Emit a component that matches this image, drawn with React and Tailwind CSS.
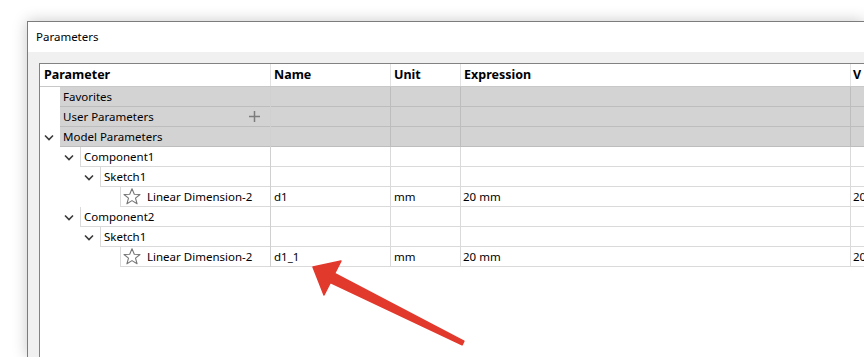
import React from "react";

const rows = [
  { label: "Favorites", indent: 20, gray: true },
  { label: "User Parameters", indent: 20, gray: true, plus: true },
  { label: "Model Parameters", indent: 20, gray: true, chevron: true },
  { label: "Component1", indent: 40, chevron: true },
  { label: "Sketch1", indent: 60, chevron: true },
  { label: "Linear Dimension-2", indent: 80, star: true, name: "d1", unit: "mm", expr: "20 mm", val: "20" },
  { label: "Component2", indent: 40, chevron: true },
  { label: "Sketch1", indent: 60, chevron: true },
  { label: "Linear Dimension-2", indent: 80, star: true, name: "d1_1", unit: "mm", expr: "20 mm", val: "20" },
];

function Chevron() {
  return (
    <svg width="10" height="7" viewBox="0 0 10 7" className="text-[#3a3a3a]">
      <polyline points="1,1.5 5,5.5 9,1.5" fill="none" stroke="currentColor" strokeWidth="1.6" />
    </svg>
  );
}

function Plus() {
  return (
    <svg width="11" height="11" viewBox="0 0 11 11" className="text-[#7c7c7c]">
      <path d="M5.5 0v11M0 5.5h11" stroke="currentColor" strokeWidth="1.5" />
    </svg>
  );
}

function Star() {
  return (
    <svg width="18" height="17" viewBox="0 0 18 17">
      <polygon
        points="9,0.8 11.3,6.2 17,6.5 12.5,10.1 14.1,15.8 9,12.6 3.9,15.8 5.5,10.1 1,6.5 6.7,6.2"
        fill="none"
        stroke="#777"
        strokeWidth="1.1"
        strokeLinejoin="round"
      />
    </svg>
  );
}

function Row({ row }) {
  const line = row.gray ? "border-[#bdbdbd]" : "border-[#dadada]";
  const bg = row.gray ? "bg-[#d3d3d3]" : "bg-white";
  return (
    <div className="flex h-[20px]">
      <div className="flex w-[231px] shrink-0 border-r border-[#d0d0d0]">
        <div className="flex shrink-0 items-center justify-end" style={{ width: row.indent }}>
          {row.chevron && (
            <div className="flex w-[20px] justify-center pr-[2px]">
              <Chevron />
            </div>
          )}
        </div>
        <div className={`flex flex-1 items-center border-b ${line} ${bg} ${row.gray ? "" : "border-l"} pl-[3px]`}>
          {row.star && (
            <span className="mr-[6px] -ml-[1px] flex">
              <Star />
            </span>
          )}
          <span className="flex-1">{row.label}</span>
          {row.plus && (
            <span className="mr-[10px] flex">
              <Plus />
            </span>
          )}
        </div>
      </div>
      <div className={`flex w-[120px] shrink-0 items-center border-b border-r ${line} ${bg} pl-[3px]`}>{row.name}</div>
      <div className={`flex w-[70px] shrink-0 items-center border-b border-r ${line} ${bg} pl-[3px]`}>{row.unit}</div>
      <div className={`flex w-[390px] shrink-0 items-center border-b border-r ${line} ${bg} pl-[2px]`}>{row.expr}</div>
      <div className={`flex flex-1 items-center overflow-hidden whitespace-nowrap border-b ${line} ${bg} pl-[2px]`}>{row.val}</div>
    </div>
  );
}

export default function App() {
  return (
    <div className="relative h-[357px] w-[864px] overflow-hidden bg-white font-['Noto_Sans',sans-serif] text-[11.5px] text-black">
      <div className="flex h-full flex-col pl-[27px] pt-[21px]">
        <div className="flex flex-1 flex-col border-l border-t border-[#7c7c7c] shadow-[0_0_14px_rgba(0,0,0,0.22)]">
          <div className="flex h-[30px] items-center bg-white pl-2">Parameters</div>
          <div className="flex flex-1 flex-col bg-[#f0f0f0] pl-[11px] pt-[11px]">
            <div className="flex-1 border-l border-t border-[#828282] bg-white">
              <div className="flex h-[23px] border-b border-[#c8c8c8] text-[12.5px] font-bold">
                <div className="flex w-[231px] shrink-0 items-center border-r border-[#e2e2e2] pl-[4px]">Parameter</div>
                <div className="flex w-[120px] shrink-0 items-center border-r border-[#e2e2e2] pl-[3px]">Name</div>
                <div className="flex w-[70px] shrink-0 items-center border-r border-[#e2e2e2] pl-[3px]">Unit</div>
                <div className="flex w-[390px] shrink-0 items-center border-r border-[#e2e2e2] pl-[3px]">Expression</div>
                <div className="flex flex-1 items-center overflow-hidden pl-[2px]">V</div>
              </div>
              {rows.map((r, i) => (
                <Row key={i} row={r} />
              ))}
            </div>
          </div>
        </div>
      </div>
      <svg className="pointer-events-none absolute left-0 top-0" width="864" height="357">
        <polygon
          points="313,267 341,261 334.6,273.5 463.9,341.2 462.1,344.8 330.4,282.5 324,295"
          fill="#e2392d"
          stroke="#e2392d"
          strokeWidth="1.5"
          strokeLinejoin="round"
        />
      </svg>
    </div>
  );
}
